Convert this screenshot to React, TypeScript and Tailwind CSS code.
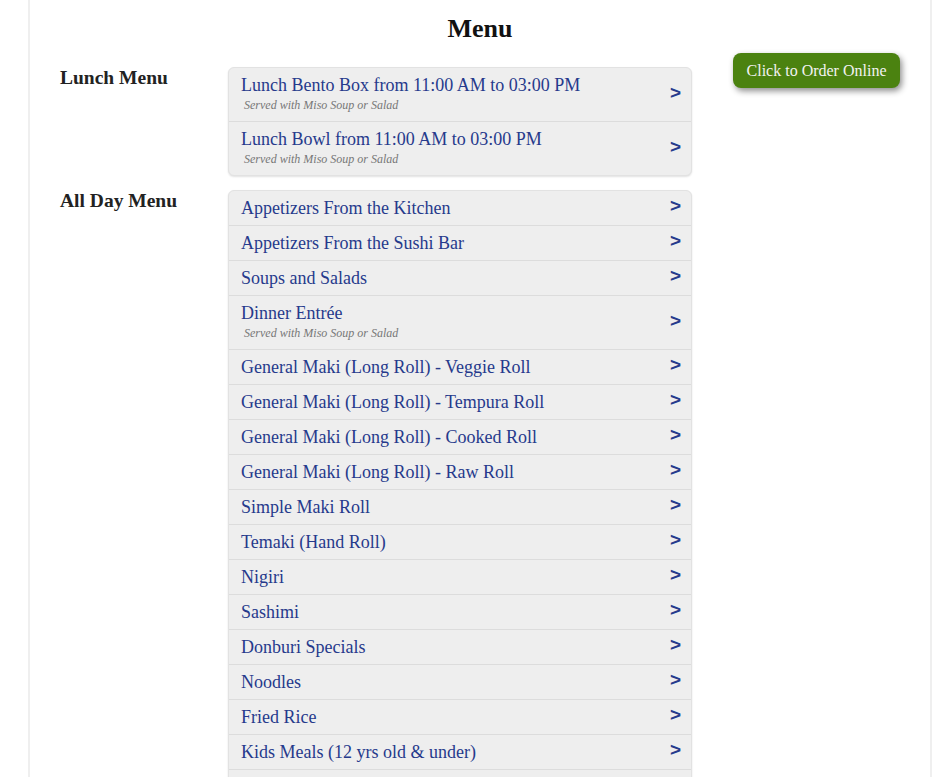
const LUNCH = [
  { name: 'Lunch Bento Box from 11:00 AM to 03:00 PM', note: 'Served with Miso Soup or Salad' },
  { name: 'Lunch Bowl from 11:00 AM to 03:00 PM', note: 'Served with Miso Soup or Salad' },
];

const ALL_DAY = [
  { name: 'Appetizers From the Kitchen' },
  { name: 'Appetizers From the Sushi Bar' },
  { name: 'Soups and Salads' },
  { name: 'Dinner Entrée', note: 'Served with Miso Soup or Salad' },
  { name: 'General Maki (Long Roll) - Veggie Roll' },
  { name: 'General Maki (Long Roll) - Tempura Roll' },
  { name: 'General Maki (Long Roll) - Cooked Roll' },
  { name: 'General Maki (Long Roll) - Raw Roll' },
  { name: 'Simple Maki Roll' },
  { name: 'Temaki (Hand Roll)' },
  { name: 'Nigiri' },
  { name: 'Sashimi' },
  { name: 'Donburi Specials' },
  { name: 'Noodles' },
  { name: 'Fried Rice' },
  { name: 'Kids Meals (12 yrs old & under)' },
  { name: 'Desserts' },
];

type Item = { name: string; note?: string };

function Section({ title, items }: { title: string; items: Item[] }) {
  return (
    <div className="flex">
      <h2 className="w-[168px] shrink-0 text-[19.5px] font-bold leading-[22px] text-[#222]">{title}</h2>
      <ul className="w-[464px] overflow-hidden rounded-[6px] border border-[#e2e2e2] bg-[#eeeeee] shadow-[0_1px_2px_rgba(0,0,0,0.12)]">
        {items.map((it, i) => (
          <li
            key={it.name}
            className={`flex items-center justify-between py-[6px] pl-[12px] pr-[10px] ${i > 0 ? 'border-t border-[#dcdcdc]' : ''}`}
          >
            <div className="min-w-0">
              <div className="text-[18px] leading-[22px] text-[#263a8c]">{it.name}</div>
              {it.note && (
                <div className="pl-[3px] text-[12px] italic leading-[19px] text-[#777]">{it.note}</div>
              )}
            </div>
            <span className="-mt-[5px] font-['Liberation_Sans',Arial,sans-serif] text-[19px] font-bold leading-none text-[#263a8c]">
              &gt;
            </span>
          </li>
        ))}
      </ul>
    </div>
  );
}

export default function App() {
  return (
    <div className="min-h-[777px] bg-white font-['Liberation_Serif','Times_New_Roman',serif]">
      <div className="ml-[28px] min-h-[777px] w-[904px] border-x-2 border-[#efefef] px-[30px]">
        <h1 className="pt-[14px] text-center text-[26px] font-bold leading-[30px] text-[#111]">Menu</h1>
        <div className="mt-[9px] flex">
          <div className="flex flex-col gap-[14px] pt-[14px]">
            <Section title="Lunch Menu" items={LUNCH} />
            <Section title="All Day Menu" items={ALL_DAY} />
          </div>
          <div className="ml-[41px]">
            <button className="h-[35px] w-[167px] rounded-[8px] bg-[#4b8210] text-[16px] text-[#f2f2f2] shadow-[2px_3px_6px_rgba(0,0,0,0.45)]">
              Click to Order Online
            </button>
          </div>
        </div>
      </div>
    </div>
  );
}
